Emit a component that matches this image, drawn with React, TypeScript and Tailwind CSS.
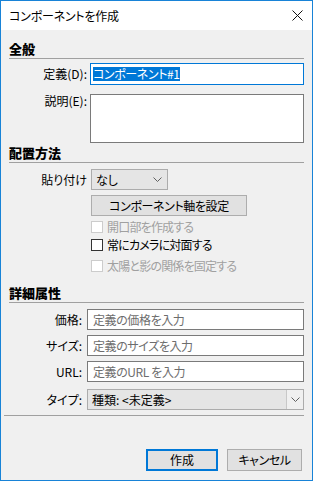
import React from 'react';

const FONT = "[font-family:'Noto_Sans_CJK_JP','Noto_Sans',sans-serif] [font-feature-settings:'palt']";

const Chevron: React.FC<{ className?: string }> = ({ className = '' }) => (
  <svg width="9" height="5" viewBox="0 0 9 5" className={className}>
    <path d="M0.5 0.5 L4.5 4.5 L8.5 0.5" fill="none" stroke="#606060" strokeWidth="1" />
  </svg>
);

const SectionHeader: React.FC<{ title: string; height: string }> = ({ title, height }) => (
  <div className={`${height} flex items-end pb-[1px] border-b border-[#a0a0a0]`}>
    <span className="text-[13px] leading-[16px] font-black text-black">{title}</span>
  </div>
);

const CheckRow: React.FC<{ label: string; disabled?: boolean; className?: string }> = ({
  label,
  disabled = false,
  className = '',
}) => (
  <div className={`h-[18px] flex items-center ml-[82px] ${className}`}>
    <div
      className={`w-[12px] h-[12px] border bg-white ${disabled ? 'border-[#cccccc]' : 'border-[#333333]'}`}
    />
    <span
      className={`ml-[4px] text-[12px] leading-[16px] tracking-[-0.8px] ${disabled ? 'text-[#a0a0a0]' : 'text-black'}`}
    >
      {label}
    </span>
  </div>
);

const TextRow: React.FC<{ label: string; placeholder: string; className?: string }> = ({
  label,
  placeholder,
  className = '',
}) => (
  <div className={`h-[21px] flex items-center ${className}`}>
    <div className="w-[73px] text-right text-[12px] leading-[16px] text-black">{label}</div>
    <div className="ml-[5px] flex-1 h-full border border-[#7a7a7a] bg-white flex items-center px-[5px]">
      <span className="text-[12px] leading-[16px] tracking-[-0.4px] text-[#6d6d6d]">{placeholder}</span>
    </div>
  </div>
);

export default function App() {
  return (
    <div className={`w-[313px] h-[481px] border border-[#1883d7] bg-[#f0f0f0] flex flex-col ${FONT}`}>
      {/* Title bar */}
      <div className="h-[29px] bg-white flex items-center justify-between pl-[8px] pr-[9px] shrink-0">
        <span className="text-[12px] leading-[16px] tracking-[-0.2px] text-black">コンポーネントを作成</span>
        <svg width="11" height="11" viewBox="0 0 11 11">
          <path d="M0.5 0.5 L10.5 10.5 M10.5 0.5 L0.5 10.5" stroke="#111" strokeWidth="1" />
        </svg>
      </div>

      <div className="flex-1 flex flex-col px-[8px]">
        {/* 全般 */}
        <SectionHeader title="全般" height="h-[29px]" />
        <div className="mt-[4px] h-[22px] flex items-center">
          <div className="w-[78px] text-right text-[12px] leading-[16px] text-black">定義(D):</div>
          <div className="ml-[3px] flex-1 h-full border border-[#0078d7] bg-white flex items-center pl-[2px]">
            <span className="bg-[#0078d7] text-white text-[12px] leading-[14px] tracking-[-0.4px]">
              コンポーネント#1
            </span>
          </div>
        </div>
        <div className="mt-[9px] h-[49px] flex">
          <div className="w-[78px] text-right text-[12px] leading-[12px] pt-[1px] text-black">説明(E):</div>
          <div className="ml-[3px] flex-1 h-full border border-[#7a7a7a] bg-white" />
        </div>

        {/* 配置方法 */}
        <SectionHeader title="配置方法" height="h-[20px]" />
        <div className="mt-[6px] h-[21px] flex items-center">
          <div className="w-[78px] text-right text-[12px] leading-[16px] text-black">貼り付け</div>
          <div className="ml-[4px] w-[77px] h-full border border-[#acacac] bg-[#e5e5e5] flex items-center justify-between pl-[4px] pr-[5px]">
            <span className="text-[12px] leading-[16px] text-black">なし</span>
            <Chevron />
          </div>
        </div>
        <div className="mt-[5px] ml-[82px] w-[156px] h-[21px] border border-[#adadad] bg-[#e1e1e1] flex items-center justify-center">
          <span className="text-[12px] leading-[16px] tracking-[-0.4px] text-black">コンポーネント軸を設定</span>
        </div>
        <CheckRow label="開口部を作成する" disabled className="mt-[2px]" />
        <CheckRow label="常にカメラに対面する" />
        <CheckRow label="太陽と影の関係を固定する" disabled className="mt-[3px]" />

        {/* 詳細属性 */}
        <SectionHeader title="詳細属性" height="h-[28px]" />
        <TextRow label="価格:" placeholder="定義の価格を入力" className="mt-[6px]" />
        <TextRow label="サイズ:" placeholder="定義のサイズを入力" className="mt-[5px]" />
        <TextRow label="URL:" placeholder="定義のURL を入力" className="mt-[5px]" />
        <div className="mt-[7px] h-[21px] flex items-center">
          <div className="w-[73px] text-right text-[12px] leading-[16px] text-black">タイプ:</div>
          <div className="ml-[5px] flex-1 h-full border border-[#acacac] bg-[#e5e5e5] flex items-center justify-between pl-[4px]">
            <span className="text-[12px] leading-[16px] text-black">種類: &lt;未定義&gt;</span>
            <div className="w-[17px] h-[19px] border-l border-[#c8c8c8] bg-[#f0f0f0] flex items-center justify-center">
              <Chevron />
            </div>
          </div>
        </div>

        <div className="mt-[5px] -ml-[5px] border-t border-[#a0a0a0]" />

        {/* Buttons */}
        <div className="mt-[33px] flex justify-end gap-[9px] mr-[2px]">
          <div className="w-[72px] h-[22px] border-2 border-[#0078d7] bg-[#e1e1e1] flex items-center justify-center">
            <span className="text-[12px] leading-[16px] text-black">作成</span>
          </div>
          <div className="w-[75px] h-[22px] border border-[#adadad] bg-[#e1e1e1] flex items-center justify-center">
            <span className="text-[12px] leading-[16px] tracking-[-0.4px] text-black">キャンセル</span>
          </div>
        </div>
      </div>
    </div>
  );
}
